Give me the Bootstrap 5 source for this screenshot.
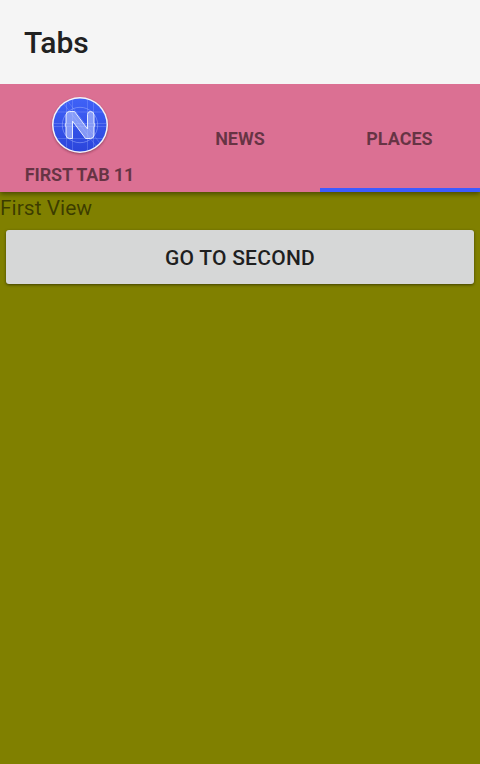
<!DOCTYPE html>
<html lang="en">
<head>
<meta charset="utf-8">
<meta name="viewport" content="width=device-width, initial-scale=1">
<title>Tabs</title>
<link href="https://cdn.jsdelivr.net/npm/bootstrap@5.3.0/dist/css/bootstrap.min.css" rel="stylesheet">
<style>
body{font-family:Roboto,"Liberation Sans",sans-serif;background:#808000;height:764px;overflow:hidden}
.app-bar{height:84px;background:#f5f5f5;padding:2px 24px 0 24px;z-index:2}
.app-title{font-size:30px;font-weight:500;line-height:36px;color:#212121}
.tab-strip{height:108px;background:#db7093;box-shadow:0 2px 5px rgba(0,0,0,.45);z-index:1}
.tab-strip .tab-link{font-size:18px;line-height:22px;font-weight:700;color:rgba(0,0,0,.54);border:0;border-bottom:4px solid transparent;border-radius:0;background:none;padding:6px 0 0;height:108px}
.tab-strip .tab-link.current{border-bottom-color:#3d5afe;padding-right:1px}
.tab-strip .with-icon{padding-top:11px}
.tab-logo{width:60px;height:62px;display:block}
.tab-caption{margin-top:7px;margin-left:-1px;letter-spacing:-.17px}
.view-label{font-size:21px;line-height:25px;padding-top:4px;height:32px;color:rgba(0,0,0,.54)}
.btn-second{margin:6px 6px 0;height:54px;border:0;border-radius:3px;background:#d6d7d7;color:#1f1f1f;font-size:21px;font-weight:500;line-height:24px;letter-spacing:.25px;box-shadow:0 1px 3px rgba(0,0,0,.5)}
.btn-second:hover{background:#d6d7d7;color:#1f1f1f}
.btn-second span{position:relative;top:1px}
</style>
<script src="https://cdn.jsdelivr.net/npm/bootstrap@5.3.0/dist/js/bootstrap.bundle.min.js"></script>
</head>
<body class="d-flex flex-column">
<header class="app-bar d-flex align-items-center position-relative"><h1 class="app-title m-0">Tabs</h1></header>
<nav class="tab-strip nav flex-nowrap position-relative">
  <button class="nav-link tab-link with-icon text-uppercase col-4 d-flex flex-column align-items-center">
    <svg class="tab-logo" viewBox="0 0 60 62">
      <defs>
        <linearGradient id="disc" x1="0" y1="0" x2="0" y2="1"><stop offset="0" stop-color="#3f62f8"/><stop offset="1" stop-color="#2b45db"/></linearGradient>
        <clipPath id="round"><circle cx="30" cy="30" r="26.5"/></clipPath>
        <filter id="soft" x="-20%" y="-20%" width="140%" height="140%"><feGaussianBlur stdDeviation=".8"/></filter>
      </defs>
      <circle cx="30" cy="31.2" r="28" fill="#5a2038" opacity=".5" filter="url(#soft)"/>
      <circle cx="30" cy="30" r="28" fill="#f4f4fb"/>
      <circle cx="30" cy="30" r="26.5" fill="url(#disc)"/>
      <g clip-path="url(#round)" fill="none" stroke="#a8baff" stroke-opacity=".35" stroke-width=".8">
        <path d="M16.500 0V60M22.500 0V60M37.500 0V60M43.500 0V60M0 17H60M0 28.500H60M0 31.500H60M0 43.500H60M7 0L53 60M13 0L59 60"/>
        <circle cx="30" cy="30" r="17.700" stroke-opacity=".6"/>
      </g>
      <path d="M19.500 16.500H24.500L37.500 34V19.500Q37.500 16.500 40.500 16.500Q44 16.500 44 20V28L45 30L44 32V40Q44 43.500 40.500 43.500H35.500L22.500 26V43.500H19.500Q16 43.500 16 40V32L15 30L16 28V20Q16 16.500 19.500 16.500Z" fill="#bcc9ff" fill-opacity=".6" stroke="#e4eaff" stroke-width="1"/>
    </svg>
    <span class="tab-caption">First Tab 11</span>
  </button>
  <button class="nav-link tab-link text-uppercase col-4 d-flex align-items-center justify-content-center">News</button>
  <button class="nav-link tab-link current text-uppercase col-4 d-flex align-items-center justify-content-center">Places</button>
</nav>
<main class="d-flex flex-column flex-grow-1">
  <div class="view-label">First View</div>
  <button class="btn btn-second text-uppercase p-0"><span>Go to second</span></button>
</main>
</body>
</html>
